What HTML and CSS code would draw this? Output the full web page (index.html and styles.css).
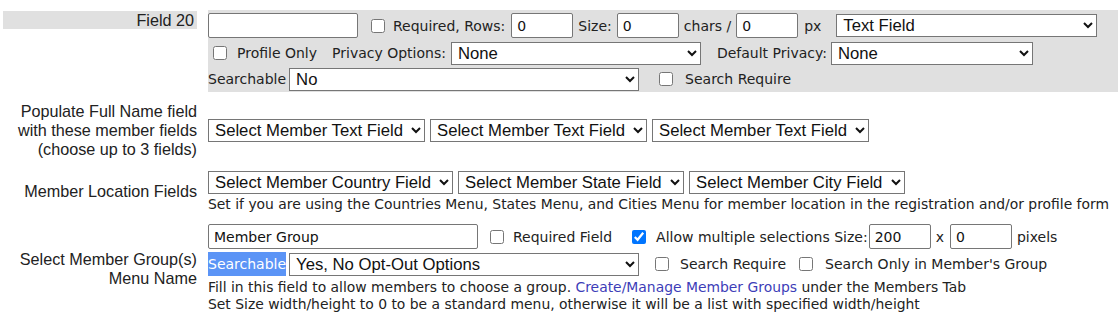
FILE: index.html
```html
<!DOCTYPE html>
<html lang="en">
<head>
  <meta charset="UTF-8">
  <title>Member Fields</title>
  <link rel="stylesheet" href="styles.css">
</head>
<body>
  <div class="form">

    <!-- Field 20 -->
    <div class="row row-top">
      <div class="label"><span class="label-bar">Field 20</span></div>
      <div class="field field-bar">
        <div class="line">
          <input type="text" class="in-name">
          <input type="checkbox" class="cb ml13">
          <span class="txt ml8">Required, Rows:</span>
          <input type="text" class="in-num ml6" value="0">
          <span class="txt ml5">Size:</span>
          <input type="text" class="in-num ml5" value="0">
          <span class="txt ml5">chars /</span>
          <input type="text" class="in-num ml5" value="0">
          <span class="txt ml6">px</span>
          <select class="sel ml15" style="width: 261px;"><option>Text Field</option></select>
        </div>
        <div class="line line-2">
          <input type="checkbox" class="cb ml5">
          <span class="txt ml10">Profile Only</span>
          <span class="txt ml15">Privacy Options:</span>
          <select class="sel ml5" style="width: 250px;"><option>None</option></select>
          <span class="txt ml16">Default Privacy:</span>
          <select class="sel ml4" style="width: 202px;"><option>None</option></select>
        </div>
        <div class="line line-3">
          <span class="txt">Searchable</span>
          <select class="sel ml3" style="width: 350px;"><option>No</option></select>
          <input type="checkbox" class="cb ml20">
          <span class="txt ml12">Search Require</span>
        </div>
      </div>
    </div>

    <!-- Full name -->
    <div class="row">
      <div class="label">Populate Full Name field<br>with these member fields<br>(choose up to 3 fields)</div>
      <div class="field">
        <div class="line">
          <select class="sel" style="width: 217px;"><option>Select Member Text Field</option></select>
          <select class="sel ml5" style="width: 217px;"><option>Select Member Text Field</option></select>
          <select class="sel ml5" style="width: 217px;"><option>Select Member Text Field</option></select>
        </div>
      </div>
    </div>

    <!-- Location -->
    <div class="row">
      <div class="label">Member Location Fields</div>
      <div class="field">
        <div class="line">
          <select class="sel" style="width: 245px;"><option>Select Member Country Field</option></select>
          <select class="sel ml5" style="width: 226px;"><option>Select Member State Field</option></select>
          <select class="sel ml5" style="width: 216px;"><option>Select Member City Field</option></select>
        </div>
        <p class="note">Set if you are using the Countries Menu, States Menu, and Cities Menu for member location in the registration and/or profile form</p>
      </div>
    </div>

    <!-- Member group -->
    <div class="row">
      <div class="label">Select Member Group(s)<br>Menu Name</div>
      <div class="field">
        <div class="line">
          <input type="text" class="in-name" style="width: 270px;" value="Member Group">
          <input type="checkbox" class="cb ml12">
          <span class="txt ml9">Required Field</span>
          <input type="checkbox" class="cb ml20" checked>
          <span class="txt ml10">Allow multiple selections Size:</span>
          <input type="text" class="in-num ml1" value="200">
          <span class="txt ml5">x</span>
          <input type="text" class="in-num ml6" value="0">
          <span class="txt ml5">pixels</span>
        </div>
        <div class="line line-gap">
          <span class="txt selected">Searchable</span>
          <select class="sel ml3" style="width: 350px;"><option>Yes, No Opt-Out Options</option></select>
          <input type="checkbox" class="cb ml16">
          <span class="txt ml11">Search Require</span>
          <input type="checkbox" class="cb ml13">
          <span class="txt ml12">Search Only in Member's Group</span>
        </div>
        <p class="note note-gap">Fill in this field to allow members to choose a group. <a href="#">Create/Manage Member Groups</a> under the Members Tab<br>Set Size width/height to 0 to be a standard menu, otherwise it will be a list with specified width/height</p>
      </div>
    </div>

  </div>
</body>
</html>
```

FILE: styles.css
```css
body {
  margin: 0;
  font-family: "Liberation Sans", Arial, sans-serif;
  color: #222;
  background-color: white;
}
.form {
  padding: 10px 0 0 3px;
}
.row {
  display: grid;
  grid-template-columns: 194px 1fr;
  column-gap: 11px;
  align-items: center;
  margin-bottom: 11px;
}
.row-top {
  align-items: start;
  margin-bottom: 10px;
}
.label {
  text-align: right;
  font-size: 16.2px;
  line-height: 19px;
}
.label-bar {
  display: block;
  margin-top: 1px;
  padding-right: 3px;
  background-color: #e0e0e0;
  line-height: 18px;
}
.field-bar {
  background-color: #e0e0e0;
  padding: 3px 0 0 0;
  height: 79px;
}
.line {
  display: flex;
  align-items: center;
  height: 25px;
  margin-bottom: 1px;
  white-space: nowrap;
}
.line > * {
  flex-shrink: 0;
}
.line-2 {
  margin-top: 3px;
  height: 24px;
}
.line-3 {
  margin-top: 2px;
  height: 24px;
}
.line-gap {
  margin-top: 3px;
  height: 24px;
}
.txt {
  font-family: "DejaVu Sans", Tahoma, sans-serif;
  font-size: 14px;
  color: #222;
}
.selected {
  background-color: #5b94f6;
  color: white;
  line-height: 24px;
}
.note {
  margin: 0;
  font-family: "DejaVu Sans", Tahoma, sans-serif;
  font-size: 13.9px;
  line-height: 17px;
  color: #222;
  white-space: nowrap;
}
.note-gap {
  margin-top: 3px;
}
.note a {
  color: #3d3db8;
  text-decoration: none;
}
.in-name,
.in-num {
  box-sizing: border-box;
  height: 25px;
  padding: 0 5px;
  border: 1px solid #767676;
  border-radius: 2px;
  font-family: "DejaVu Sans", Tahoma, sans-serif;
  font-size: 14px;
  color: #111;
}
.in-name {
  width: 150px;
}
.in-num {
  width: 62px;
}
.sel {
  box-sizing: border-box;
  height: 23px;
  padding: 0 2px;
  border: 1px solid #767676;
  border-radius: 0;
  background-color: white;
  font-family: "Liberation Sans", Arial, sans-serif;
  font-size: 16.7px;
  color: #111;
}
.cb {
  width: 14px;
  height: 14px;
}
input,
select {
  margin: 0;
}
.ml1 { margin-left: 1px; }
.ml3 { margin-left: 3px; }
.ml4 { margin-left: 4px; }
.ml5 { margin-left: 5px; }
.ml6 { margin-left: 6px; }
.ml8 { margin-left: 8px; }
.ml9 { margin-left: 9px; }
.ml10 { margin-left: 10px; }
.ml11 { margin-left: 11px; }
.ml12 { margin-left: 12px; }
.ml13 { margin-left: 13px; }
.ml14 { margin-left: 14px; }
.ml15 { margin-left: 15px; }
.ml16 { margin-left: 16px; }
.ml20 { margin-left: 20px; }
```
